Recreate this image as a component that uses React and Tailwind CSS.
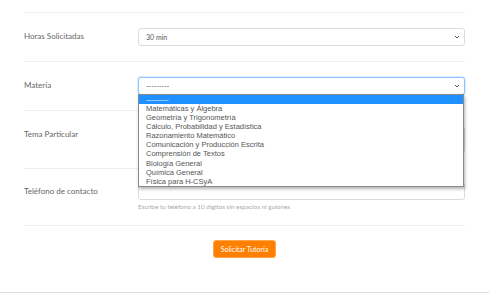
import React from "react";

const materias = [
  "Matemáticas y Álgebra",
  "Geometría y Trigonometría",
  "Cálculo, Probabilidad y Estadística",
  "Razonamiento Matemático",
  "Comunicación y Producción Escrita",
  "Comprensión de Textos",
  "Biología General",
  "Química General",
  "Física para H-CSyA",
];

function Chevron() {
  return (
    <svg width="6" height="4" viewBox="0 0 6 4" className="shrink-0">
      <path d="M1 1 L3 3 L5 1" fill="none" stroke="#555" strokeWidth="1" />
    </svg>
  );
}

function Select({ value, focused }) {
  return (
    <div
      className={
        focused
          ? "flex h-[18px] w-full items-center justify-between rounded-[3px] border border-[#8cc4fb] bg-white pl-[7px] pr-[4px] shadow-[0_0_0_1px_rgba(140,196,251,0.3)]"
          : "flex h-[18px] w-full items-center justify-between rounded-[3px] border border-[#dcdcdc] bg-white pl-[7px] pr-[4px]"
      }
    >
      <span className="text-[7px] text-[#555]">{value}</span>
      <Chevron />
    </div>
  );
}

function Row({ label, children }) {
  return (
    <div className="flex border-b border-[#eeeeee] py-[15px]">
      <div className="w-[114px] shrink-0 pt-[3px] text-[8px] leading-[10px] text-[#666]">{label}</div>
      <div className="relative flex-1">{children}</div>
    </div>
  );
}

export default function App() {
  return (
    <div className="h-[294px] w-full bg-white" style={{ fontFamily: "Lato, 'Open Sans', sans-serif" }}>
      <div className="h-[293px] border-b border-[#dddddd] px-[24px]">
        <div className="h-[13px] border-b border-[#eeeeee]" />

        <Row label="Horas Solicitadas">
          <Select value="30 min" />
        </Row>

        <Row label="Materia">
          <Select value="---------" focused />
          <div
            className="absolute left-0 right-[1px] top-[17px] z-10 border border-[#8a8a8a] bg-white shadow-[1px_2px_3px_rgba(0,0,0,0.3)]"
            style={{ fontFamily: "'Liberation Sans', Arial, sans-serif" }}
          >
            <div className="h-[9px] bg-[#1e90ff] pl-[7px] text-[7.5px] leading-[9px] text-white">---------</div>
            {materias.map((m) => (
              <div key={m} className="h-[9.1px] pl-[7px] text-[7.5px] leading-[9.1px] text-[#555]">
                {m}
              </div>
            ))}
          </div>
        </Row>

        <Row label="Tema Particular">
          <div className="h-[27px] w-full rounded-[3px] border border-[#dcdcdc]" />
        </Row>

        <div className="flex border-b border-[#eeeeee] pt-[13px] pb-[14px]">
          <div className="w-[114px] shrink-0 pt-[4px] text-[8px] leading-[10px] text-[#666]">Teléfono de contacto</div>
          <div className="flex-1">
            <div className="h-[18px] w-full rounded-[3px] border border-[#dcdcdc] bg-white" />
            <div className="mt-[3px] text-[6.4px] leading-[8px] text-[#aaa]">
              Escribe tu teléfono a 10 dígitos sin espacios ni guiones
            </div>
          </div>
        </div>

        <div className="flex justify-center pt-[14px]">
          <button className="h-[18px] rounded-[3px] border border-[#ffa54d] bg-[#ff8000] px-[7px] text-[7px] text-white">
            Solicitar Tutoría
          </button>
        </div>
      </div>
    </div>
  );
}
